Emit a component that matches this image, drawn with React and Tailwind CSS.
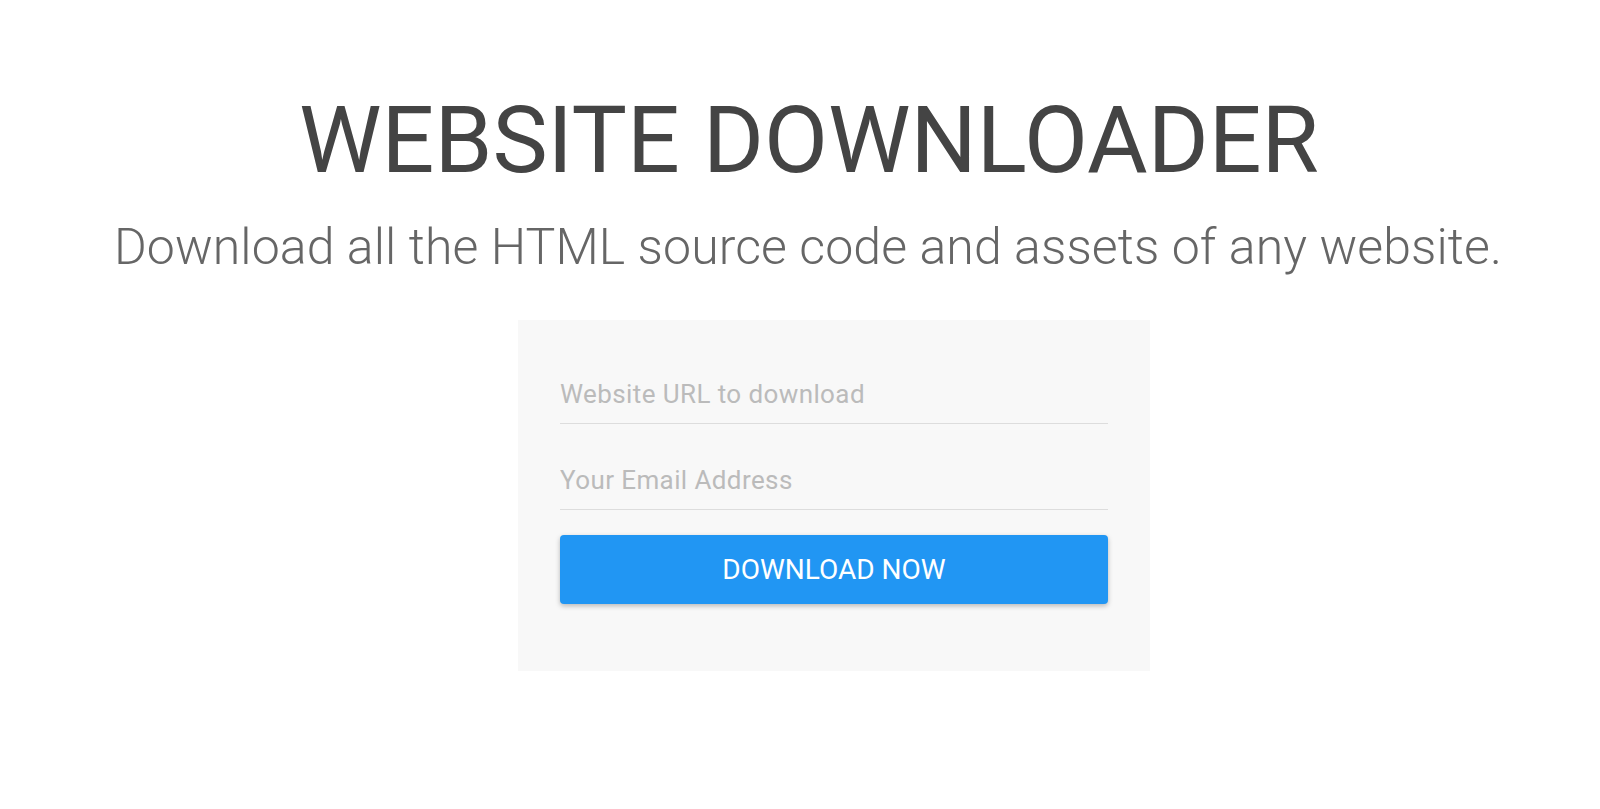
export default function App() {
  return (
    <main
      className="min-h-screen bg-white flex flex-col items-center"
      style={{ fontFamily: "Roboto, 'Liberation Sans', sans-serif" }}
    >
      <h1 className="mt-[94px] pl-[18px] text-[93px] leading-[93px] font-normal text-[#444444]">
        WEBSITE DOWNLOADER
      </h1>
      <p className="mt-[35px] pl-[16px] text-[50px] leading-[50px] font-light text-[#666666] tracking-[0.1px]">
        Download all the HTML source code and assets of any website.
      </p>

      <div className="mt-[48px] pl-[68px] flex justify-center w-full">
        <form
          className="w-[632px] bg-[#f8f8f8] px-[42px] pt-[54px] pb-[67px] flex flex-col"
          onSubmit={(e) => e.preventDefault()}
        >
          <input
            type="text"
            placeholder="Website URL to download"
            className="h-[50px] pb-[10px] bg-transparent border-b border-[#dddddd] text-[26px] tracking-[0.4px] text-[#444] placeholder:text-[#bbbbbb] outline-none"
          />
          <input
            type="email"
            placeholder="Your Email Address"
            className="mt-[36px] h-[50px] pb-[10px] bg-transparent border-b border-[#dddddd] text-[26px] tracking-[0.4px] text-[#444] placeholder:text-[#bbbbbb] outline-none"
          />
          <button
            type="submit"
            className="mt-[25px] h-[69px] rounded-[4px] bg-[#2196f3] text-white text-[28px] uppercase shadow-[0_2px_5px_rgba(0,0,0,0.26)]"
          >
            Download Now
          </button>
        </form>
      </div>
    </main>
  );
}
